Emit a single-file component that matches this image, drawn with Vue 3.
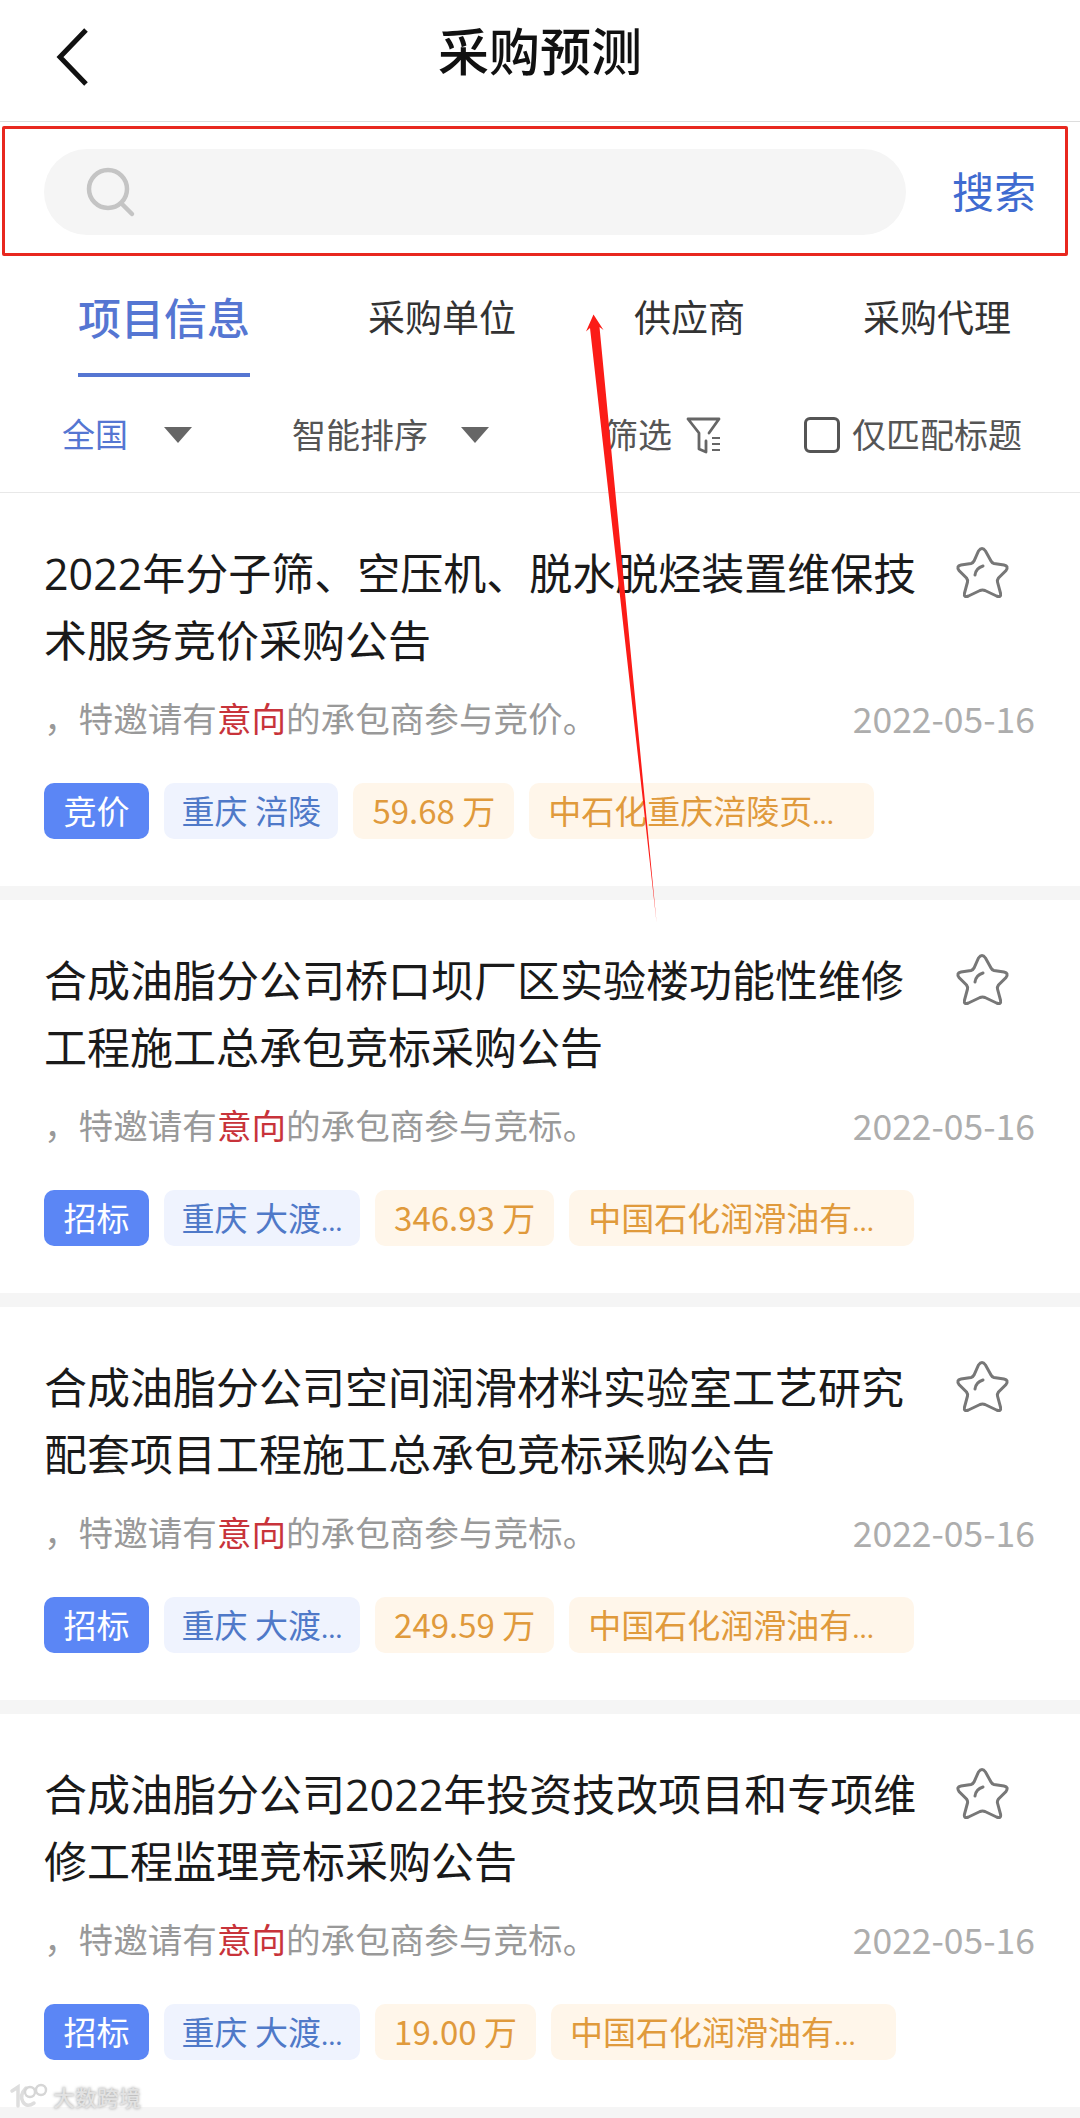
<script setup>
const tabs = ['项目信息', '采购单位', '供应商', '采购代理']

const items = [
  {
    title: '2022年分子筛、空压机、脱水脱烃装置维保技术服务竞价采购公告',
    way: '竞价',
    area: '重庆 涪陵',
    money: '59.68 万',
    org: '中石化重庆涪陵页'
  },
  {
    title: '合成油脂分公司桥口坝厂区实验楼功能性维修工程施工总承包竞标采购公告',
    way: '招标',
    area: '重庆 大渡',
    cut: true,
    money: '346.93 万',
    org: '中国石化润滑油有'
  },
  {
    title: '合成油脂分公司空间润滑材料实验室工艺研究配套项目工程施工总承包竞标采购公告',
    way: '招标',
    area: '重庆 大渡',
    cut: true,
    money: '249.59 万',
    org: '中国石化润滑油有'
  },
  {
    title: '合成油脂分公司2022年投资技改项目和专项维修工程监理竞标采购公告',
    way: '招标',
    area: '重庆 大渡',
    cut: true,
    money: '19.00 万',
    org: '中国石化润滑油有'
  }
]
</script>

<template>
  <div class="page">
    <header class="top">
      <svg class="back" width="34" height="60" viewBox="0 0 34 60">
        <path d="M31 3 L5 30 L31 57" fill="none" stroke="#111" stroke-width="5" />
      </svg>
      <h1>采购预测</h1>
    </header>

    <div class="search-row">
      <div class="search-box">
        <svg width="52" height="54" viewBox="0 0 52 54">
          <circle cx="22" cy="22" r="19" fill="none" stroke="#c4c4c4" stroke-width="4.5" />
          <path d="M36 37 L46 47" stroke="#c4c4c4" stroke-width="4.5" stroke-linecap="round" />
        </svg>
      </div>
      <span class="search-btn">搜索</span>
    </div>

    <nav class="tabs">
      <div v-for="(t, i) in tabs" :key="t" class="tab" :class="{ active: i === 0 }">{{ t }}</div>
    </nav>

    <div class="filters">
      <div class="f f-area">
        <span class="blue">全国</span>
        <i class="tri tri-area"></i>
      </div>
      <div class="f f-sort">
        <span>智能排序</span>
        <i class="tri"></i>
      </div>
      <div class="f f-screen">
        <span>筛选</span>
        <svg width="38" height="38" viewBox="0 0 38 38">
          <path d="M3 3 H34 L24 17 M3 3 L14 17 V33 L21 36 V25" fill="none" stroke="#666" stroke-width="2.8" stroke-linejoin="round" stroke-linecap="round" />
          <path d="M27 22 H35 M27 28 H35 M27 34 H35" stroke="#666" stroke-width="2.2" />
        </svg>
      </div>
      <div class="f f-check">
        <i class="box"></i>
        <span>仅匹配标题</span>
      </div>
    </div>

    <article v-for="(item, i) in items" :key="i" class="item">
      <div class="head">
        <h2>{{ item.title }}</h2>
        <svg class="star" width="55" height="56" viewBox="0 0 55 56">
          <path d="M23.5 6 Q27 1 30.5 6 L36 16 Q37 18 39 18.5 L49 20 Q54 21 51 25.5 L43.5 33 Q42 35 42.5 37 L45.5 48 Q46.5 53 41.5 51 L30 45.5 Q27.5 44.5 25 45.5 L13.5 51 Q8.5 53 9.5 48 L12.5 37 Q13 35 11.5 33 L4 25.5 Q1 21 6 20 L16 18.5 Q18 18 19 16 Z" fill="none" stroke="#777" stroke-width="3" />
          <path d="M20 30 Q21 23 28 21" fill="none" stroke="#777" stroke-width="3" stroke-linecap="round" />
        </svg>
      </div>
      <div class="sub">
        <p>，特邀请有<em>意向</em>的承包商参与{{ item.way === '竞价' ? '竞价' : '竞标' }}。</p>
        <time>2022-05-16</time>
      </div>
      <div class="tags">
        <span class="tag way">{{ item.way }}</span>
        <span class="tag area">{{ item.area }}<small v-if="item.cut">...</small></span>
        <span class="tag money">{{ item.money }}</span>
        <span class="tag money org">{{ item.org }}<small>...</small></span>
      </div>
    </article>

    <!-- annotations painted over the screenshot -->
    <div class="red-box"></div>
    <svg class="arrow" width="1080" height="2118" viewBox="0 0 1080 2118">
      <polygon points="593.5,314.5 603.5,330 599.5,327 656.5,922 590,328 586,331.5" fill="#fb1c17" />
    </svg>
    <div class="mark">
      <svg width="40" height="26" viewBox="0 0 40 26">
        <path d="M3 8 L9 4 V23 M17 5 Q10 12 14 19 Q18 25 25 20" fill="none" stroke="#dedede" stroke-width="3.5" stroke-linecap="round" />
        <circle cx="21" cy="9" r="5" fill="none" stroke="#d6d6d6" stroke-width="2.4" />
        <circle cx="32" cy="7" r="5" fill="none" stroke="#d6d6d6" stroke-width="2.4" />
      </svg>
      <span>大数跨境</span>
    </div>
  </div>
</template>

<style>
body {
  background: #fff;
}
</style>

<style scoped>
.page {
  position: relative;
  width: 1080px;
  height: 2118px;
  overflow: hidden;
  background: #f5f5f5;
  font-family: "Noto Sans CJK SC", "Noto Sans", sans-serif;
  color: #1a1a1a;
}

.top {
  position: relative;
  height: 122px;
  box-sizing: border-box;
  background: #fff;
  border-bottom: 1px solid #ddd;
  display: flex;
  align-items: center;
  justify-content: center;
}

.top h1 {
  margin: 0 0 24px;
  font-size: 51px;
  font-weight: 500;
  line-height: 70px;
  color: #111;
}

.back {
  position: absolute;
  left: 55px;
  top: 27px;
}

.search-row {
  height: 134px;
  box-sizing: border-box;
  padding: 27px 44px 21px 44px;
  background: #fff;
  display: flex;
  align-items: center;
  justify-content: space-between;
}

.search-box {
  width: 862px;
  height: 86px;
  box-sizing: border-box;
  padding: 18px 0 0 42px;
  border-radius: 43px;
  background: #f5f5f5;
}

.search-box svg {
  display: block;
}

.search-btn {
  margin-bottom: 4px;
  font-size: 42px;
  line-height: 56px;
  color: #3f6bd0;
}

.tabs {
  display: flex;
  gap: 118px;
  padding: 35px 0 0 78px;
  background: #fff;
}

.tab {
  font-size: 37px;
  line-height: 50px;
  padding-bottom: 36px;
  color: #333;
}

.tab.active {
  font-size: 43px;
  font-weight: 500;
  color: #5576d2;
  padding-bottom: 32px;
  border-bottom: 4px solid #5576d2;
}

.filters {
  height: 116px;
  box-sizing: border-box;
  padding-left: 62px;
  background: #fff;
  border-bottom: 1px solid #e8e8e8;
  display: flex;
  align-items: center;
  font-size: 34px;
  color: #555;
}

.f {
  display: flex;
  align-items: center;
  flex: none;
}

.f span {
  margin-bottom: 3px;
}

.blue {
  font-size: 33px;
  color: #5576d2;
}

.f-sort {
  margin-left: 100px;
}

.f-screen {
  margin-left: 115px;
  gap: 13px;
}

.f-check {
  margin-left: 81px;
  gap: 12px;
}

.tri {
  width: 0;
  height: 0;
  margin-left: 33px;
  border-left: 14px solid transparent;
  border-right: 14px solid transparent;
  border-top: 16px solid #666;
}

.tri-area {
  margin-left: 36px;
}

.box {
  width: 36px;
  height: 36px;
  box-sizing: border-box;
  border: 3px solid #555;
  border-radius: 6px;
}

.item {
  height: 393px;
  box-sizing: border-box;
  padding: 47px 45px 0 44px;
  margin-bottom: 14px;
  background: #fff;
}

.head {
  display: flex;
  align-items: flex-start;
}

.head h2 {
  width: 885px;
  flex: none;
  margin: 0;
  font-family: "Open Sans", "Noto Sans CJK SC", sans-serif;
  font-size: 43px;
  font-weight: 400;
  line-height: 67px;
  color: #1a1a1a;
}

.star {
  flex: none;
  margin: 5px 0 0 26px;
}

.sub {
  margin-top: 20px;
  display: flex;
  justify-content: space-between;
  align-items: center;
  height: 46px;
  color: #999;
}

.sub p {
  margin: 0;
  font-size: 34.6px;
}

.sub em {
  font-style: normal;
  color: #c8333a;
}

.sub time {
  font-size: 35.5px;
  color: #adadad;
}

.tags {
  margin-top: 43px;
  display: flex;
  gap: 15px;
}

.tag {
  height: 56px;
  box-sizing: border-box;
  padding: 0 18px;
  border-radius: 10px;
  font-size: 33px;
  line-height: 54px;
  white-space: pre;
  flex: none;
}

.tag small {
  font-size: 26px;
}

.way {
  width: 105px;
  padding: 0;
  text-align: center;
  background: #5b86f5;
  color: #fff;
}

.area {
  padding: 0 17.5px;
  background: #eff3fe;
  color: #4f79c8;
}

.money {
  padding: 0 19px;
  background: #fff6ea;
  color: #e09a3c;
}

.org {
  width: 345px;
  padding-right: 0;
}

.red-box {
  position: absolute;
  left: 2px;
  top: 126px;
  width: 1066px;
  height: 130px;
  box-sizing: border-box;
  border: 3px solid #e8281f;
  border-radius: 2px;
}

.arrow {
  position: absolute;
  left: 0;
  top: 0;
  pointer-events: none;
}

.mark {
  position: absolute;
  left: 9px;
  top: 2082px;
  display: flex;
  align-items: center;
  gap: 4px;
  font-size: 22px;
  font-weight: 500;
  line-height: 28px;
  color: #e2e2e2;
  text-shadow: 0 0 3px #999;
}
</style>
